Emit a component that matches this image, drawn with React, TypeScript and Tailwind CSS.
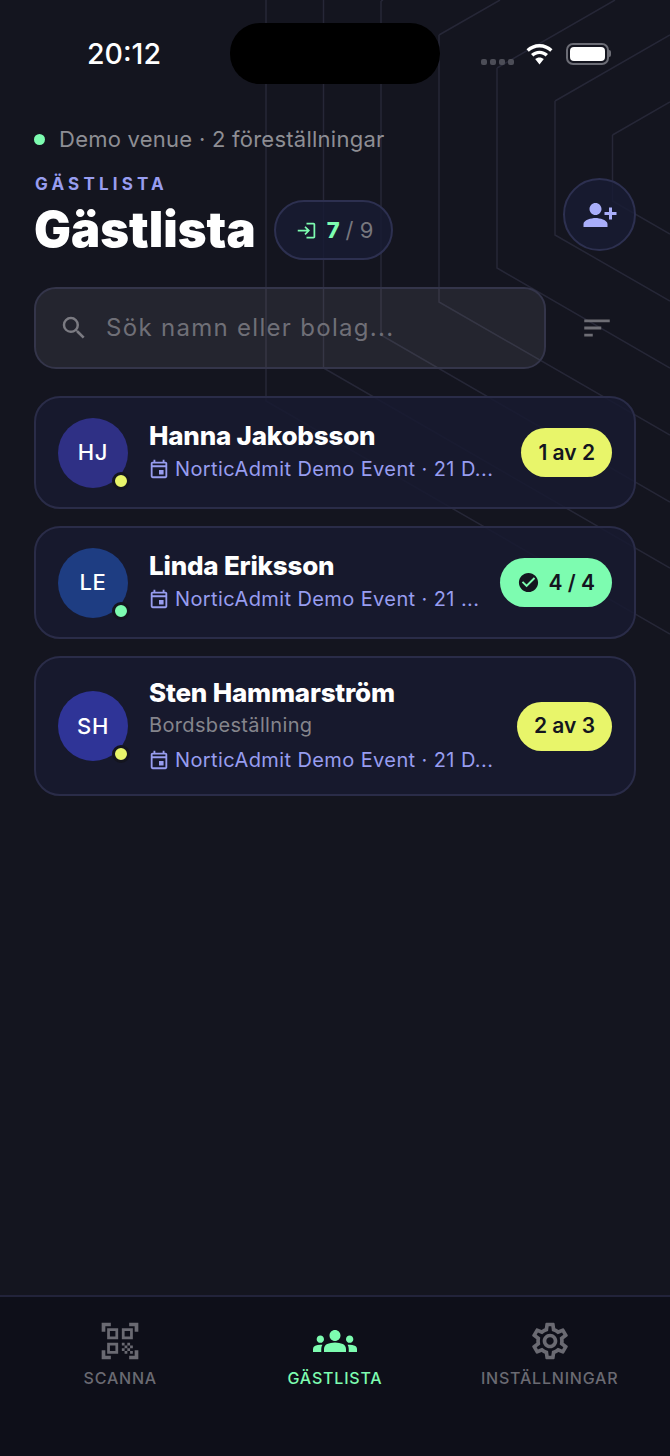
import React from "react";
import { MdCheckCircle, MdGroups, MdLogin, MdOutlineEvent, MdOutlineSettings, MdPersonAddAlt1, MdQrCodeScanner, MdSearch, MdSort } from "react-icons/md";

const inter = "font-['Inter','Liberation_Sans',sans-serif]";

function BackgroundLines() {
  const paths = [
    "M266 0V401L670 634",
    "M323.5 0V368L670 568",
    "M381 1V335L670 502",
    "M381 1L383 0",
    "M439 35L500 0M439 35V302L670 435",
    "M497 68L615 0M497 68V268L670 368",
    "M555 101L670 35M555 101V235L670 301",
    "M612.5 135L670 102M612.5 135V201L670 234",
  ];
  return (
    <svg className="absolute inset-0 pointer-events-none" width="670" height="1456" fill="none">
      {paths.map((d) => (
        <path key={d} d={d} stroke="#262737" strokeWidth="1.5" />
      ))}
    </svg>
  );
}

function StatusBar() {
  return (
    <div className="relative h-[108px] shrink-0 flex items-start">
      <div className={`absolute left-[87px] top-[37px] text-[28.5px] leading-[34px] font-medium text-white ${inter}`}>20:12</div>
      <div className="absolute left-[230px] top-[23px] w-[210px] h-[61px] rounded-[30px] bg-black" />
      <div className="absolute left-[481px] top-[59px] flex gap-[3px]">
        <span className="w-[6px] h-[6px] rounded-[2px] bg-[#4c4d57]" />
        <span className="w-[6px] h-[6px] rounded-[2px] bg-[#4c4d57]" />
        <span className="w-[6px] h-[6px] rounded-[2px] bg-[#4c4d57]" />
        <span className="w-[6px] h-[6px] rounded-[2px] bg-[#4c4d57]" />
      </div>
      <svg className="absolute left-[526px] top-[44px]" width="27" height="21" viewBox="0 0 27 21" fill="#fff">
        <path d="M13.5 0C8.4 0 3.9 2 .5 5.3l2.3 2.4C5.6 5 9.3 3.4 13.5 3.4s7.9 1.6 10.7 4.3l2.3-2.4C23.100 2 18.600 0 13.500 0Z" />
        <path d="M13.500 6.700c-3.300 0-6.300 1.300-8.500 3.400l2.400 2.400c1.600-1.500 3.700-2.400 6.100-2.400s4.500.9 6.100 2.400l2.400-2.400c-2.200-2.100-5.200-3.400-8.500-3.400Z" />
        <path d="M13.500 13.400c-1.700 0-3.200.7-4.300 1.700l4.300 5.400 4.300-5.400c-1.100-1-2.600-1.700-4.300-1.700Z" />
      </svg>
      <div className="absolute left-[566px] top-[43px] w-[43px] h-[22px] rounded-[7px] border-2 border-[#6b6c75] p-[2px]">
        <div className="w-full h-full rounded-[4px] bg-white" />
      </div>
      <div className="absolute left-[609px] top-[50px] w-[2px] h-[7px] rounded-r-sm bg-[#6b6c75]" />
    </div>
  );
}

function Header() {
  return (
    <div className="px-[34px]">
      <div className="flex items-center gap-[14px] h-[62px]">
        <span className="w-[11px] h-[11px] rounded-full bg-[#7dfcb0]" />
        <span className={`text-[22px] leading-[28px] tracking-[0.25px] text-[#8e8e94] ${inter}`}>Demo venue · 2 föreställningar</span>
      </div>
      <div className="flex justify-between">
        <div>
          <div className={`text-[17px] leading-[26px] font-bold tracking-[4.2px] text-[#989df0] ml-[1px] mt-[1px] ${inter}`}>GÄSTLISTA</div>
          <div className="flex items-center gap-[18px] mt-[1px]">
            <h1 className={`w-[222px] text-[49px] leading-[64px] font-black whitespace-nowrap text-white ${inter}`}>Gästlista</h1>
            <div className="flex items-center h-[60px] w-[119px] justify-center rounded-full border-2 border-[#2d3050] bg-[#181b33]/80">
              <MdLogin className="text-[#7dfcb0] ml-[2px] mr-[10px]" size={21} />
              <span className={`text-[22px] font-extrabold text-[#7dfcb0] ${inter}`}>7</span>
              <span className={`text-[22px] text-[#77777e] ml-[6px] ${inter}`}>/ 9</span>
            </div>
          </div>
        </div>
        <div className="w-[73px] h-[73px] mt-[8px] rounded-full border-2 border-[#2d3050] bg-[#181b33]/80 flex items-center justify-center">
          <MdPersonAddAlt1 className="text-[#a9aefa]" size={36} />
        </div>
      </div>
      <div className="flex items-center mt-[25px] gap-[34px]">
        <div className="flex-1 h-[82px] rounded-[22px] border-2 border-[#34354a] bg-white/[0.07] flex items-center pl-[23px]">
          <MdSearch className="text-[#7b7b82] shrink-0" size={30} />
          <span className={`ml-[17px] text-[24px] tracking-[1.3px] text-[#6f6f77] ${inter}`}>Sök namn eller bolag...</span>
        </div>
        <MdSort className="text-[#6e6e75] mr-[22px]" size={34} />
      </div>
    </div>
  );
}

type Guest = {
  initials: string;
  name: string;
  sub?: string;
  event: string;
  avatar: string;
  dot: string;
  done?: boolean;
  badge: string;
};

const guests: Guest[] = [
  { initials: "HJ", name: "Hanna Jakobsson", event: "NorticAdmit Demo Event · 21 D...", avatar: "bg-[#2f3085]", dot: "bg-[#e8f56a]", badge: "1 av 2" },
  { initials: "LE", name: "Linda Eriksson", event: "NorticAdmit Demo Event · 21 ...", avatar: "bg-[#1e3d82]", dot: "bg-[#7dfcb0]", done: true, badge: "4 / 4" },
  { initials: "SH", name: "Sten Hammarström", sub: "Bordsbeställning", event: "NorticAdmit Demo Event · 21 D...", avatar: "bg-[#2f3497]", dot: "bg-[#e8f56a]", badge: "2 av 3" },
];

function GuestCard({ g }: { g: Guest }) {
  return (
    <div className={`flex items-center rounded-[26px] border-2 border-[#2a2c48] bg-[#171a30]/85 pl-[22px] pr-[22px] ${g.sub ? "h-[140px]" : "h-[113px]"}`}>
      <div className={`relative w-[70px] h-[70px] shrink-0 rounded-full flex items-center justify-center ${g.avatar}`}>
        <span className={`text-[22px] font-medium tracking-[0.7px] text-white ${inter}`}>{g.initials}</span>
        <span className={`absolute left-[54px] top-[54px] w-[18px] h-[18px] rounded-full border-[3px] border-[#14151f] ${g.dot}`} />
      </div>
      <div className="ml-[21px] flex-1 min-w-0 pb-[4px]">
        <div className={`text-[26px] leading-[36px] font-extrabold tracking-[-0.2px] text-white whitespace-nowrap ${inter}`}>{g.name}</div>
        {g.sub && <div className={`text-[20px] leading-[28px] tracking-[0.35px] text-[#85858c] ${inter}`}>{g.sub}</div>}
        <div className={`flex items-center gap-[5px] ${g.sub ? "mt-[7px]" : "mt-[1px]"}`}>
          <MdOutlineEvent className="text-[#989df0] shrink-0 -ml-[1px]" size={22} />
          <span className={`text-[20px] leading-[28px] tracking-[0.4px] text-[#989df0] whitespace-nowrap ${inter}`}>{g.event}</span>
        </div>
      </div>
      <div className={`h-[49px] shrink-0 rounded-full flex items-center justify-center gap-[8px] px-[17px] ${g.done ? "bg-[#7dfcb0]" : "bg-[#e8f56a]"}`}>
        {g.done && <MdCheckCircle className="text-[#14151f]" size={23} />}
        <span className={`text-[21px] font-semibold text-[#14151f] whitespace-nowrap ${inter}`}>{g.badge}</span>
      </div>
    </div>
  );
}

function NavItem({ icon, label, active }: { icon: React.ReactNode; label: string; active?: boolean }) {
  return (
    <div className="flex flex-col items-center">
      <div className={`h-[44px] flex items-center justify-center ${active ? "text-[#7dfcb0]" : "text-[#6a6a72]"}`}>{icon}</div>
      <div className={`mt-[4px] text-[16px] leading-[22px] font-medium tracking-[0.8px] ${active ? "text-[#7dfcb0]" : "text-[#6a6a72]"} ${inter}`}>{label}</div>
    </div>
  );
}

export default function App() {
  return (
    <div className="relative w-[670px] h-[1456px] overflow-hidden bg-[#14151f] flex flex-col">
      <BackgroundLines />
      <div className="relative flex-1 flex flex-col">
        <StatusBar />
        <Header />
        <div className="flex flex-col gap-[17px] px-[34px] mt-[27px]">
          {guests.map((g) => (
            <GuestCard key={g.name} g={g} />
          ))}
        </div>
      </div>
      <div className="relative h-[161px] shrink-0 border-t-2 border-[#22233a] bg-[#0e0f19] grid grid-cols-3 px-[13px] pt-[22px]">
        <NavItem icon={<MdQrCodeScanner size={44} />} label="SCANNA" />
        <NavItem icon={<MdGroups size={44} />} label="GÄSTLISTA" active />
        <NavItem icon={<MdOutlineSettings size={44} />} label="INSTÄLLNINGAR" />
      </div>
    </div>
  );
}
